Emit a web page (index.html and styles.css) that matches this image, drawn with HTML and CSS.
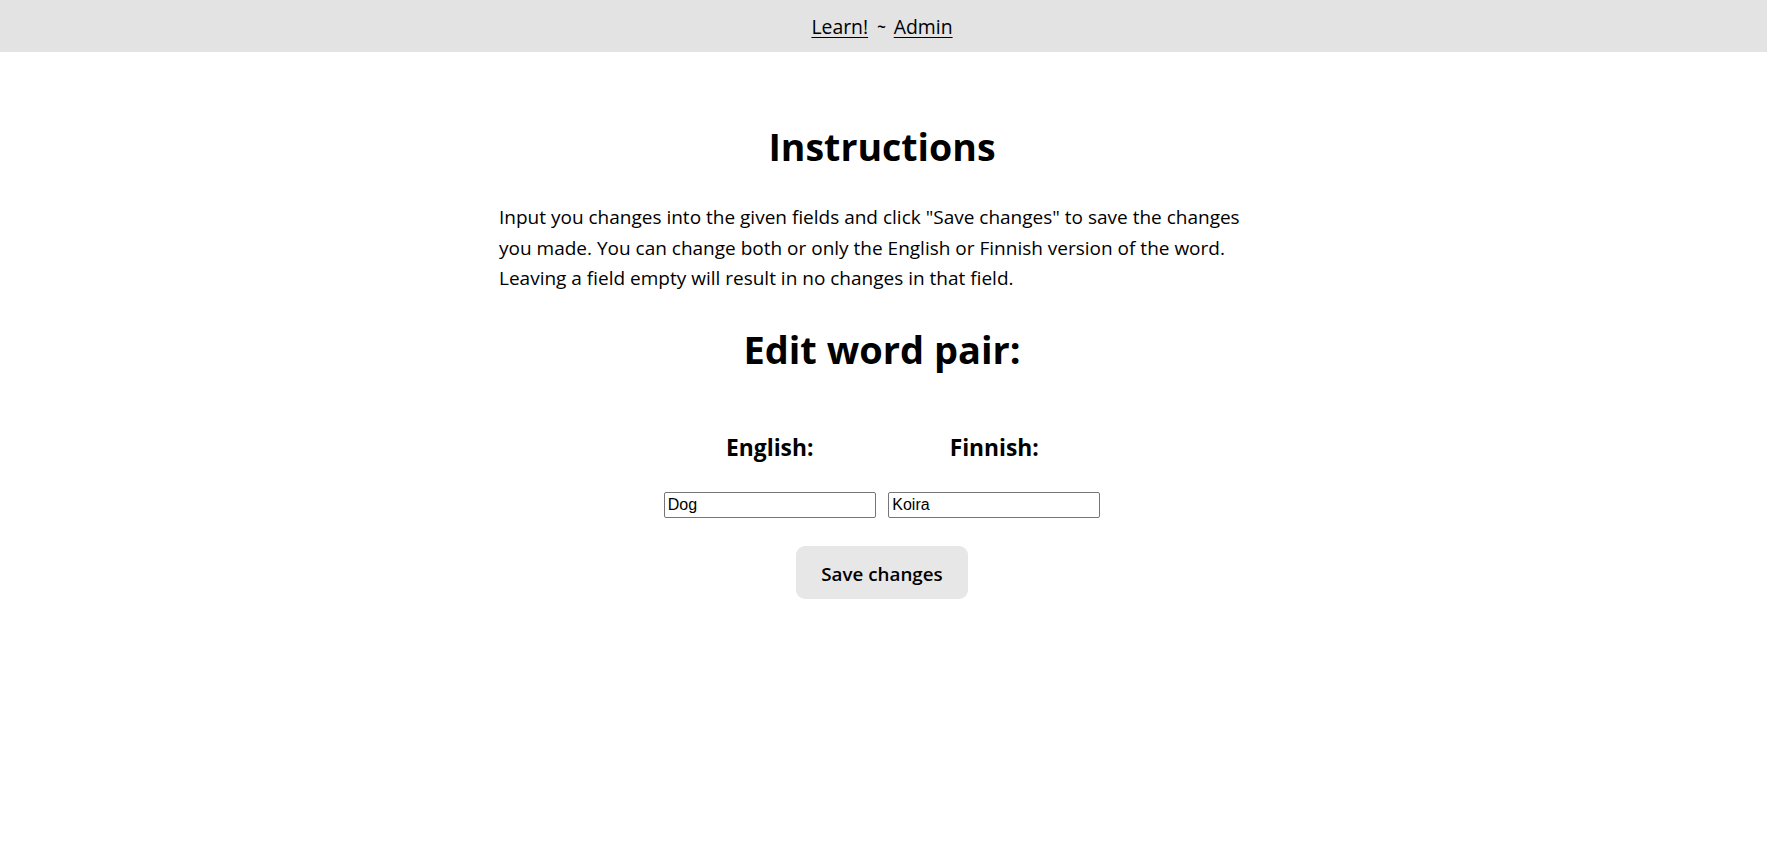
FILE: index.html
```html
<!DOCTYPE html>
<html lang="en">
<head>
<meta charset="utf-8">
<title>Edit word pair</title>
<link rel="stylesheet" href="styles.css">
</head>
<body>
<nav class="topnav">
  <div class="topnav-inner">
    <a href="#" class="nav-link">Learn!</a>
    <span class="nav-sep">~</span>
    <a href="#" class="nav-link">Admin</a>
  </div>
</nav>
<main class="page">
  <section class="content">
    <h1 class="title">Instructions</h1>
    <p class="instructions">Input you changes into the given fields and click "Save changes" to save the changes you made. You can change both or only the English or Finnish version of the word. Leaving a field empty will result in no changes in that field.</p>
    <h2 class="subtitle">Edit word pair:</h2>
    <form class="edit-form">
      <div class="fields">
        <label class="field-label" for="en">English:</label>
        <label class="field-label" for="fi">Finnish:</label>
        <input class="field-input" id="en" type="text" value="Dog">
        <input class="field-input" id="fi" type="text" value="Koira">
      </div>
      <div class="actions">
        <button type="button" class="save-btn">Save changes</button>
      </div>
    </form>
  </section>
</main>
</body>
</html>
```
FILE: styles.css
```css
* { box-sizing: border-box; }

html, body {
  margin: 0;
  padding: 0;
  background: #ffffff;
  color: #000000;
  font-family: "Open Sans", "Noto Sans", sans-serif;
}

.topnav {
  background: #e3e3e3;
  height: 52px;
}

.topnav-inner {
  height: 100%;
  display: flex;
  align-items: center;
  justify-content: center;
  padding-right: 3px;
  font-size: 19.4px;
}

.nav-link {
  color: #000000;
  text-decoration: underline;
  text-underline-offset: 3px;
  text-decoration-thickness: 1px;
}

.nav-sep {
  margin: 0 8px 0 9px;
  font-size: 15px;
  font-weight: 700;
}

.page {
  padding: 71px 3px 0 0;
}

.content {
  width: 766px;
  margin: 0 auto;
}

.title {
  margin: 0;
  text-align: center;
  font-size: 37.5px;
  line-height: 48px;
  font-weight: 700;
}

.instructions {
  margin: 31px 0 0;
  font-size: 19px;
  line-height: 30.5px;
}

.subtitle {
  margin: 31px 0 0;
  text-align: center;
  font-size: 38px;
  line-height: 48px;
  font-weight: 700;
}

.edit-form {
  margin-top: 60px;
}

.fields {
  display: grid;
  grid-template-columns: 212px 212px;
  column-gap: 12.5px;
  row-gap: 29px;
  justify-content: center;
}

.field-label {
  text-align: center;
  font-size: 22.8px;
  line-height: 30px;
  font-weight: 700;
}

.field-input {
  width: 212px;
  height: 26px;
  margin: 0;
  padding: 1px 3px;
  border: 1px solid #767676;
  border-radius: 2px;
  font-family: "Liberation Sans", Arial, sans-serif;
  font-size: 16px;
  color: #000000;
  background: #ffffff;
}

.actions {
  display: flex;
  justify-content: center;
  margin-top: 28.5px;
}

.save-btn {
  width: 172px;
  height: 53px;
  padding: 3px 0 0;
  border: none;
  border-radius: 9px;
  background: #e7e7e7;
  color: #000000;
  font-family: "Open Sans", "Noto Sans", sans-serif;
  font-size: 18.8px;
  font-weight: 600;
  cursor: pointer;
}
```
